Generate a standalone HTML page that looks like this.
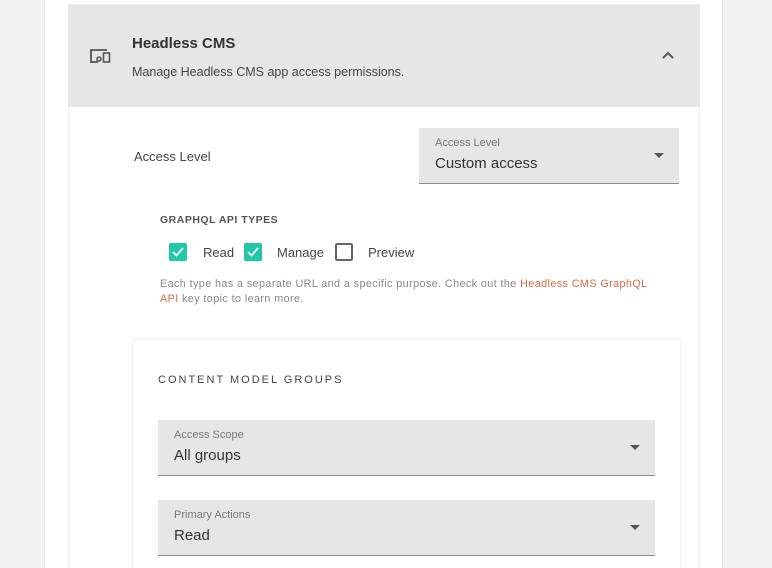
<!DOCTYPE html>
<html><head><style>
*{box-sizing:border-box;margin:0;padding:0}
html,body{width:772px;height:568px;overflow:hidden}
body{background:#f2f2f2;font-family:"Liberation Sans",sans-serif;position:relative}
.card{position:absolute;left:44px;top:0;width:679px;height:568px;background:#fff;border-left:1px solid #e4e4e4;border-right:1px solid #e4e4e4}
.sec{position:absolute;left:68px;top:4px;width:632px;height:564px;background:#fff;border:1px solid #ececec;border-bottom:none}
.hdr{position:absolute;left:68px;top:5px;width:632px;height:102px;background:#e6e6e6}
.abs{position:absolute}
.sel{position:absolute;background:#e6e6e6;border-bottom:1px solid #8a8a8a}
.sel .l{position:absolute;left:16px;top:9px;font-size:11px;color:#777}
.sel .v{position:absolute;left:16px;top:27px;font-size:15px;color:#333}
.sel .a{position:absolute;right:15px;top:25px;width:0;height:0;border-left:5px solid transparent;border-right:5px solid transparent;border-top:5px solid #555}
.cb{position:absolute;top:243px;width:18px;height:18px;border-radius:2px;background:#1fc8a7}
.cb svg{position:absolute;left:2px;top:2px}
.t{font-size:13px;color:#444}
</style></head><body>
<div class="card"></div>
<div class="sec"></div>
<div class="hdr"></div>
<svg class="abs" style="left:88px;top:47px" width="24" height="18" viewBox="0 0 24 18"><path d="M3 14V3h16" fill="none" stroke="#555" stroke-width="1.8"/><path d="M2 15h8" stroke="#555" stroke-width="1.8"/><circle cx="11" cy="12" r="2" fill="none" stroke="#555" stroke-width="1.6"/><rect x="15.5" y="6" width="6" height="9" fill="none" stroke="#555" stroke-width="1.6"/></svg>
<div class="abs" style="left:132px;top:35px;font-size:15px;font-weight:bold;color:#333">Headless CMS</div>
<div class="abs" style="left:132px;top:65px;font-size:12.5px;color:#444">Manage Headless CMS app access permissions.</div>
<svg class="abs" style="left:661px;top:50px" width="14" height="10"><path d="M2 8l5-5 5 5" fill="none" stroke="#555" stroke-width="2"/></svg>
<div class="abs t" style="left:134px;top:149px">Access Level</div>
<div class="sel" style="left:419px;top:128px;width:260px;height:56px"><div class="l">Access Level</div><div class="v">Custom access</div><div class="a"></div></div>
<div class="abs" style="left:160px;top:214px;font-size:10.5px;font-weight:bold;color:#555;letter-spacing:.5px">GRAPHQL API TYPES</div>
<div class="cb" style="left:169px"><svg width="14" height="14"><path d="M2 7l3.5 3.5L12 3" fill="none" stroke="#fff" stroke-width="1.8"/></svg></div>
<div class="abs t" style="left:203px;top:245px">Read</div>
<div class="cb" style="left:244px"><svg width="14" height="14"><path d="M2 7l3.5 3.5L12 3" fill="none" stroke="#fff" stroke-width="1.8"/></svg></div>
<div class="abs t" style="left:277px;top:245px">Manage</div>
<div class="abs" style="left:335px;top:243px;width:18px;height:18px;border:2px solid #666;border-radius:2px"></div>
<div class="abs t" style="left:368px;top:245px">Preview</div>
<div class="abs" style="left:160px;top:277px;width:520px;font-size:10.8px;line-height:15px;color:#888;letter-spacing:.4px">Each type has a separate URL and a specific purpose. Check out the <span style="color:#d86b45">Headless CMS GraphQL<br>API</span> key topic to learn more.</div>
<div class="abs" style="left:133px;top:340px;width:547px;height:240px;background:#fff;box-shadow:0 0 2px rgba(0,0,0,.15)"></div>
<div class="abs" style="left:158px;top:374px;font-size:11px;color:#444;letter-spacing:2px">CONTENT MODEL GROUPS</div>
<div class="sel" style="left:158px;top:420px;width:497px;height:56px"><div class="l">Access Scope</div><div class="v">All groups</div><div class="a"></div></div>
<div class="sel" style="left:158px;top:500px;width:497px;height:56px"><div class="l">Primary Actions</div><div class="v">Read</div><div class="a"></div></div>
</body></html>
